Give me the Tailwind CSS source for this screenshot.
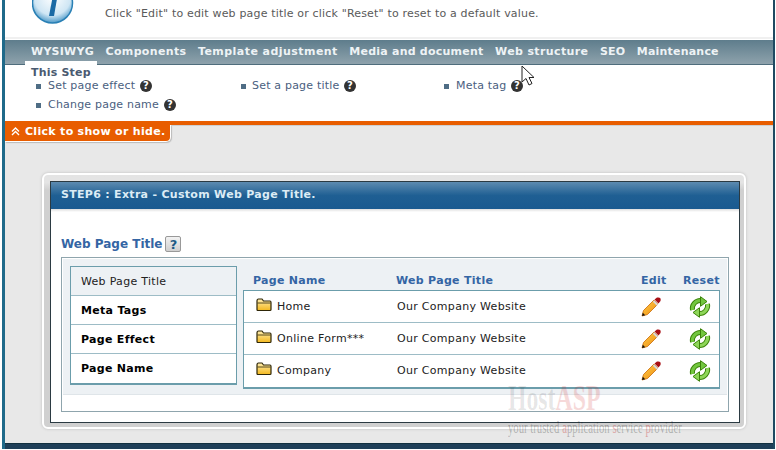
<!DOCTYPE html>
<html><head><meta charset="utf-8"><script src="https://cdn.jsdelivr.net/npm/@tailwindcss/browser@4"></script></head>
<body class="m-0 overflow-hidden bg-white">
<svg width="0" height="0" class="absolute"><defs>
<linearGradient id="pen" x1="0" y1="0" x2="1" y2="1"><stop offset="0" stop-color="#ffd04a"/><stop offset="1" stop-color="#ef8a10"/></linearGradient>
<linearGradient id="fold" x1="0" y1="0" x2="0" y2="1"><stop offset="0" stop-color="#ffeeb0"/><stop offset="1" stop-color="#f3b81e"/></linearGradient>
<symbol id="q" viewBox="0 0 12 12"><circle cx="6" cy="6" r="6" fill="#333"/><text x="6" y="9.4" text-anchor="middle" font-size="10" font-weight="700" fill="#fff" font-family="DejaVu Sans">?</text></symbol>
<symbol id="folder" viewBox="0 0 16 14"><path d="M1 3Q1 1 2.500 1H6L7.500 3H14Q15 3 15 4.500V11.500Q15 12.500 14 12.500H2Q1 12.500 1 11.500Z" fill="url(#fold)" stroke="#2e2608" stroke-width="1.200"/><path d="M1.500 5H14.500" stroke="#2e2608" stroke-width=".8"/></symbol>
<symbol id="pencil" viewBox="0 0 20 20"><path d="M1 19L2.500 13.500L13 3L17 7L6.500 17.500Z" fill="url(#pen)" stroke="#c96a08" stroke-width=".8"/><path d="M1 19L1.800 15.800L4.200 18.200Z" fill="#111"/><path d="M12.500 4L16.500 8" stroke="#d8d8d8" stroke-width="2"/><path d="M13.500 2.500L16 .6Q18 0 19.200 1Q20 2.200 19.500 4L17.500 6.500Z" fill="#a80f14"/></symbol>
<symbol id="reset" viewBox="0 0 22 22"><g fill="none" stroke-linecap="butt"><path d="M3.500 14A8 8 0 0 1 12 4.500" stroke="#3a8208" stroke-width="5"/><path d="M3.500 14A8 8 0 0 1 12 4.500" stroke="#72c63e" stroke-width="3"/><path d="M18.500 8A8 8 0 0 1 10 17.500" stroke="#3a8208" stroke-width="5"/><path d="M18.500 8A8 8 0 0 1 10 17.500" stroke="#8ed658" stroke-width="3"/></g><path d="M11.500 .7L18 5.500L11.500 10.300Z" fill="#72c63e" stroke="#3a8208"/><path d="M10.500 21.300L4 16.500L10.500 11.700Z" fill="#8ed658" stroke="#3a8208"/></symbol>
</defs></svg>

<div class="relative ml-[2px] flex h-[449px] w-[773px] flex-col overflow-hidden border-r-[2px] border-l-[3px] border-r-[#1f4a62] border-l-[#1f6a8a] bg-[#e8e8e8] font-['DejaVu_Sans',sans-serif] text-[11px]">
  <!-- top message -->
  <div class="flex h-[37px] shrink-0 items-start overflow-hidden bg-white">
    <svg class="mt-[-23px] ml-[27px] shrink-0" width="42" height="48" viewBox="0 0 42 48">
      <defs><radialGradient id="orb" cx=".5" cy=".35" r=".7"><stop offset="0" stop-color="#fff"/><stop offset=".65" stop-color="#cfe6f4"/><stop offset="1" stop-color="#2d86bd"/></radialGradient></defs>
      <circle cx="20.500" cy="26" r="20" fill="url(#orb)" stroke="#2a80b5" stroke-width="1.500"/>
      <path d="M21 18L26 16L22 39H17Z" fill="#1a6aa5"/>
    </svg>
    <p class="mt-[6px] ml-[31px] tracking-[.175px] whitespace-nowrap text-[#5a5a5a]">Click "Edit" to edit web page title or click "Reset" to reset to a default value.</p>
  </div>
  <div class="h-[2px] shrink-0 bg-[#f0f0f0]"></div>
  <!-- nav -->
  <nav class="relative flex h-[26px] shrink-0 items-start gap-[11.5px] border-t border-b border-t-white border-b-[#4f6d7c] bg-gradient-to-b from-[#5e7d8c] to-[#8ea2ac] pt-[4px] pl-[26px] text-[11px] leading-[15px] font-bold tracking-[.45px] whitespace-nowrap text-[#eef3f5]">
    <span class="tracking-[.25px]">WYSIWYG</span><span class="tracking-[.35px]">Components</span><span>Template adjustment</span><span class="tracking-[.23px]">Media and document</span><span class="tracking-[.38px]">Web structure</span><span class="tracking-[.2px]">SEO</span><span class="tracking-[.2px]">Maintenance</span>
    <span class="absolute top-[21px] left-[20px] h-[4px] w-[72px] bg-white"></span>
  </nav>
  <!-- this step -->
  <section class="h-[56px] shrink-0 bg-white pl-[26px] tracking-[.2px] text-[#4a6080]">
    <div class="h-[14px] pt-[1px] leading-[14px] font-bold text-[#4a5a70]">This Step</div>
    <div class="grid grid-cols-[205px_203px_200px] gap-y-[5px] pl-[5px] leading-[14px]">
      <div class="flex items-center"><i class="mr-[7px] size-[5px] bg-[#4f6d85]"></i>Set page effect<svg class="ml-[5px]" width="12" height="12"><use href="#q"/></svg></div>
      <div class="flex items-center"><i class="mr-[6px] size-[5px] bg-[#4f6d85]"></i>Set a page title<svg class="ml-[5px]" width="12" height="12"><use href="#q"/></svg></div>
      <div class="flex items-center"><i class="mr-[7px] size-[5px] bg-[#4f6d85]"></i>Meta tag<svg class="ml-[5px]" width="12" height="12"><use href="#q"/></svg></div>
      <div class="flex items-center"><i class="mr-[7px] size-[5px] bg-[#4f6d85]"></i>Change page name<svg class="ml-[5px]" width="12" height="12"><use href="#q"/></svg></div>
    </div>
  </section>
  <div class="h-[4px] shrink-0 bg-[#e85d00]"></div>
  <div class="h-[1px] shrink-0 bg-[#cfcfcf]"></div>
  <!-- toggle tab -->
  <div class="mt-[-1px] flex h-[17px] w-[166px] shrink-0 items-center rounded-br-[5px] border-r border-b border-white bg-[#e85d00] pb-[3px] pl-[6px] leading-none font-bold tracking-[.3px] whitespace-nowrap text-white shadow-[1px_1px_1px_#bbb]">
    <svg class="mr-[5px]" width="9" height="9" viewBox="0 0 9 9" fill="none" stroke="#fff" stroke-width="1.400"><path d="M1 4.500L4.500 1L8 4.500M1 8L4.500 4.500L8 8"/></svg>Click to show or hide.
  </div>
  <!-- card -->
  <main class="mt-[31px] ml-[37px] h-[256px] w-[704px] shrink-0 rounded-[6px] border-2 border-white bg-[#d0d0d0] bg-gradient-to-b from-[#e4e4e4] from-[3%] to-[#d0d0d0] to-[6%] px-[6px] pt-[6px] pb-[4px] shadow-[0_0_3px_#bbb]">
    <div class="flex h-full w-[690px] flex-col border border-[#2b3a42] bg-white">
      <header class="h-[27px] shrink-0 bg-[linear-gradient(#5d8bb0,#1f5f93_50%,#1a5a90)] pt-[6px] pl-[10px] leading-[14px] font-bold tracking-[.3px] text-[#dcecf5]">STEP6 : Extra - Custom Web Page Title.</header>
      <div class="h-[3px] shrink-0 bg-gradient-to-b from-[#ddd] to-white"></div>
      <div class="flex h-[45px] shrink-0 items-end pb-[5px] pl-[10px]">
        <h2 class="text-[12px] leading-[16px] font-bold text-[#3465a4]">Web Page Title</h2>
        <span class="ml-[3px] flex h-[16px] w-[16px] items-center justify-center rounded-[2px] border border-[#999] bg-gradient-to-b from-[#f2f2f2] to-[#cfcfcf] text-[13px] leading-none font-bold text-[#1d5a85]">?</span>
      </div>
      <!-- fieldset -->
      <div class="mx-[10px] h-[155px] w-[668px] border border-[#8fa5ad] p-[1px]">
        <div class="flex h-[136px] items-start border-b border-[#dfe5e9] bg-[#edf1f4] pt-[7px] pl-[7px] tracking-[.3px]">
          <aside class="w-[167px] shrink-0 border border-b-2 border-[#6b9dab] bg-white text-black">
            <div class="h-[29px] border-b border-[#9dbcc6] bg-[#edf1f4] pt-[8px] pl-[10px] leading-[14px] text-[#222]">Web Page Title</div>
            <div class="h-[29px] border-b border-[#9dbcc6] pt-[8px] pl-[10px] leading-[14px] font-bold">Meta Tags</div>
            <div class="h-[29px] border-b border-[#9dbcc6] pt-[8px] pl-[10px] leading-[14px] font-bold">Page Effect</div>
            <div class="h-[29px] pt-[8px] pl-[10px] leading-[14px] font-bold">Page Name</div>
          </aside>
          <div class="ml-[6px] w-[477px] shrink-0">
            <div class="grid h-[24px] grid-cols-[153px_245px_42px_37px] pt-[8px] leading-[14px] font-bold text-[#3465a4]">
              <span class="pl-[10px]">Page Name</span><span>Web Page Title</span><span class="whitespace-nowrap">Edit</span><span class="whitespace-nowrap">Reset</span>
            </div>
            <div class="border border-b-2 border-[#6b9dab] bg-white text-[#222]">
              <div class="grid h-[32px] grid-cols-[153px_244px_40px_38px] items-center border-b border-[#9dbcc6] pt-[1px]"><span class="flex items-center pl-[12px]"><svg class="mr-[5px] -translate-y-[2px]" width="16" height="14"><use href="#folder"/></svg>Home</span><span>Our Company Website</span><svg width="20" height="20"><use href="#pencil"/></svg><svg class="ml-[8px]" width="22" height="22"><use href="#reset"/></svg></div>
              <div class="grid h-[32px] grid-cols-[153px_244px_40px_38px] items-center border-b border-[#9dbcc6] pt-[1px]"><span class="flex items-center pl-[12px]"><svg class="mr-[5px] -translate-y-[2px]" width="16" height="14"><use href="#folder"/></svg>Online Form***</span><span>Our Company Website</span><svg width="20" height="20"><use href="#pencil"/></svg><svg class="ml-[8px]" width="22" height="22"><use href="#reset"/></svg></div>
              <div class="grid h-[32px] grid-cols-[153px_244px_40px_38px] items-center"><span class="flex items-center pl-[12px]"><svg class="mr-[5px] -translate-y-[2px]" width="16" height="14"><use href="#folder"/></svg>Company</span><span>Our Company Website</span><svg width="20" height="20"><use href="#pencil"/></svg><svg class="ml-[8px]" width="22" height="22"><use href="#reset"/></svg></div>
            </div>
          </div>
        </div>
      </div>
    </div>
  </main>
  <div class="mt-auto h-[6px] shrink-0 border-t border-[#12303f] bg-[#1f3f58]"></div>

  <!-- watermark -->
  <div class="pointer-events-none absolute top-[381px] left-[503px] font-['Liberation_Serif',serif] font-bold whitespace-nowrap text-black/10">
    <div class="h-[32px] origin-left scale-x-[.66] text-[36px] leading-[34px]">Host<span class="text-[#c00000]/15">ASP</span></div>
    <div class="mt-[6px] origin-left scale-x-[.63] text-[17px] leading-[17px] font-normal text-black/25">your trusted <span class="text-[#c00000]/30">a</span>pplication <span class="text-[#c00000]/30">s</span>ervice <span class="text-[#c00000]/30">p</span>rovider</div>
  </div>
  <!-- cursor -->
  <svg class="absolute top-[65px] left-[516px]" width="14" height="22" viewBox="0 0 14 22"><path d="M1 1V17L5 13.500L8 20L11 18.500L8 12.500H13Z" fill="#fff" stroke="#222" stroke-width="1"/></svg>
</div>
</body></html>
